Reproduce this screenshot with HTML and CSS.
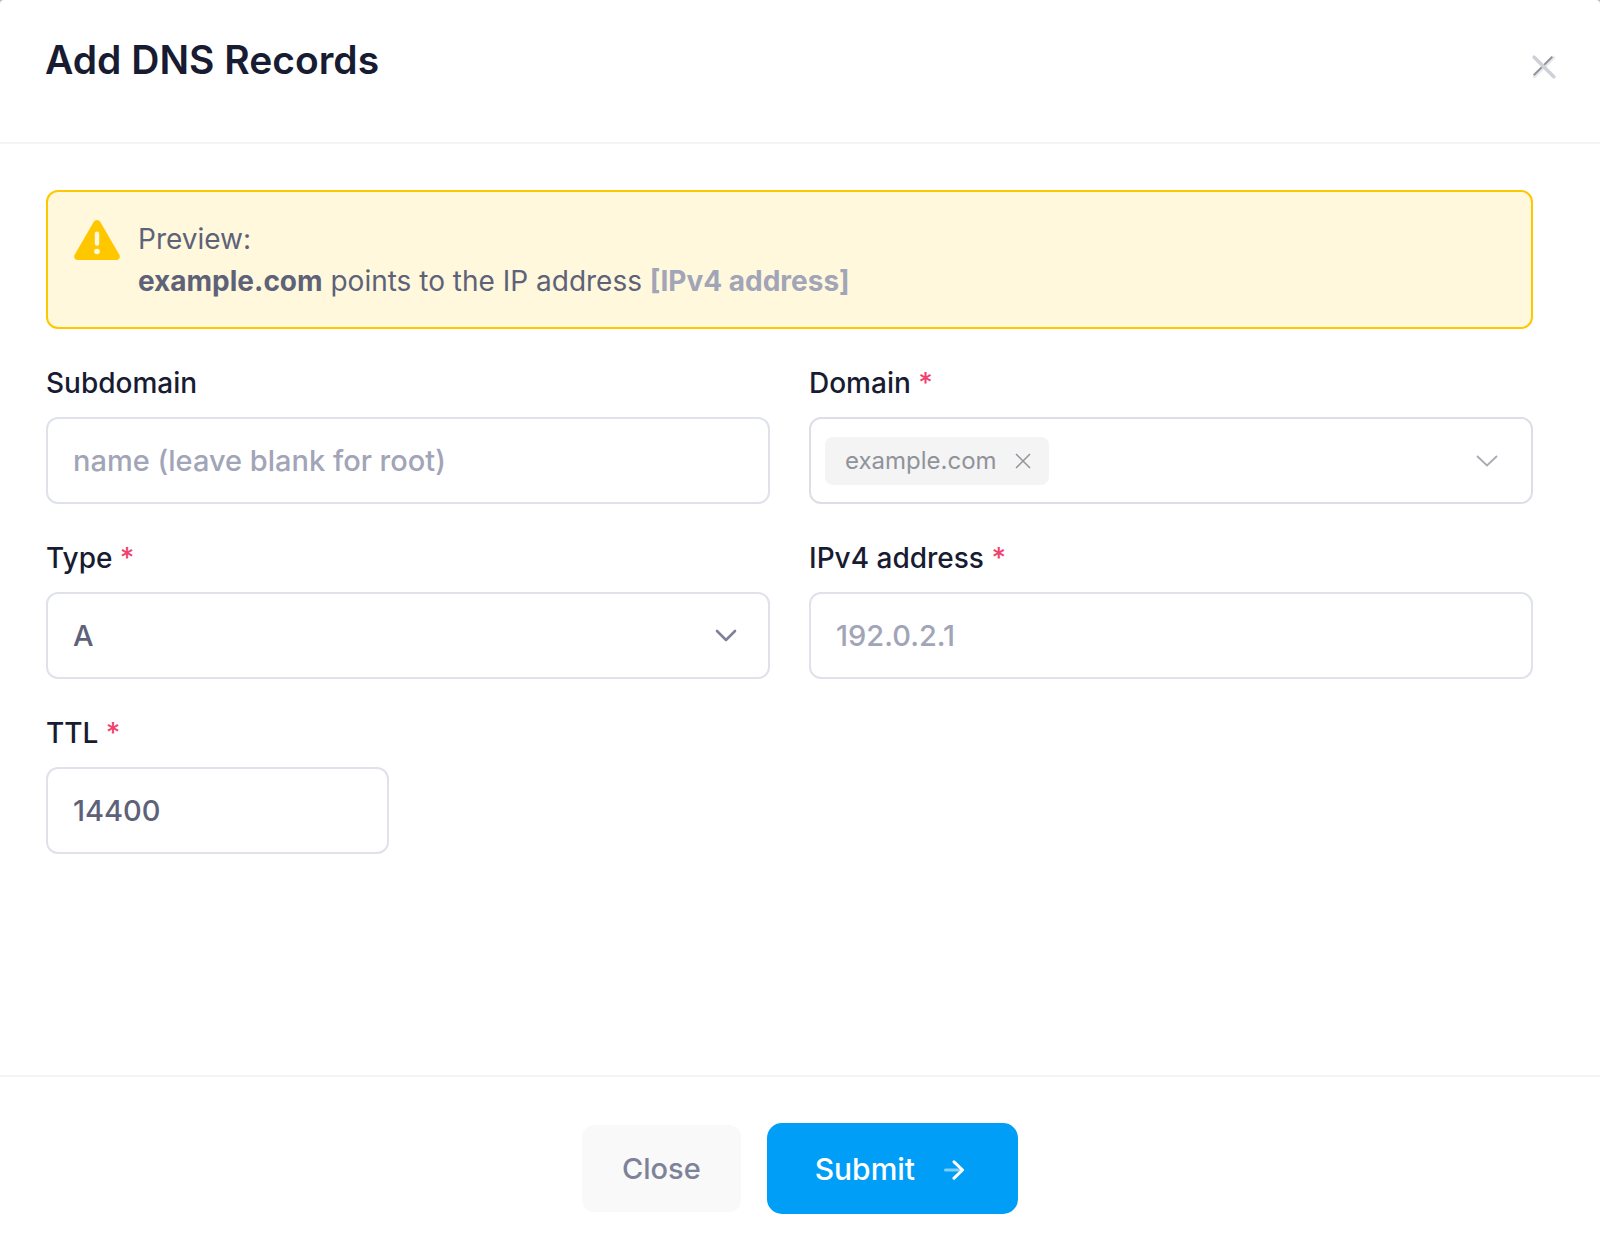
FILE: index.html
```html
<!DOCTYPE html>
<html lang="en">
<head>
<meta charset="utf-8">
<meta name="viewport" content="width=device-width, initial-scale=1">
<title>Add DNS Records</title>
<link rel="stylesheet" href="styles.css">
</head>
<body>
<form class="dialog" role="dialog" aria-labelledby="dialog-title">
  <header class="dialog-header">
    <h1 class="dialog-title" id="dialog-title">Add DNS Records</h1>
    <button class="dialog-dismiss" type="button" aria-label="Dismiss">
      <svg width="24" height="24" viewBox="0 0 24 24" fill="none" stroke-linecap="round">
        <path d="M2.500 21.500l19-19" stroke="#e9eaef" stroke-width="3.600"/>
        <path d="M1.700 20.300L20.300 1.700" stroke="#939396" stroke-width="2" stroke-linecap="butt"/>
        <path d="M2.200 2.200l19.600 19.600" stroke="#cfd0da" stroke-width="3.600"/>
      </svg>
    </button>
  </header>

  <main class="dialog-body">
    <div class="alert">
      <svg class="alert-icon" width="46" height="40" viewBox="0 0 46 40">
        <path d="M19.800 1.800a3.800 3.800 0 0 1 6.400 0l19 32.700c1.500 2.600.2 5.500-2.700 5.500H3.500c-2.900 0-4.200-2.900-2.700-5.500z" fill="#ffc700"/>
        <path d="M23 13.800v9.700" stroke="#fff8dd" stroke-width="4.400" stroke-linecap="round"/>
        <circle cx="23" cy="31.500" r="2.800" fill="#fff8dd"/>
      </svg>
      <div class="alert-text">
        <div>Preview:</div>
        <div><strong>example.com</strong> points to the IP address <strong class="muted">[IPv4 address]</strong></div>
      </div>
    </div>

    <div class="fields">
      <div class="field">
        <label class="label" for="subdomain">Subdomain</label>
        <input class="control" id="subdomain" type="text" placeholder="name (leave blank for root)">
      </div>
      <div class="field">
        <label class="label" for="domain">Domain <span class="required">*</span></label>
        <div class="control tag-select">
          <span class="tag">example.com
            <button class="tag-remove" type="button" aria-label="Remove example.com">
              <svg width="16" height="16" viewBox="0 0 16 16" fill="none" stroke="#909399" stroke-width="1.500"><path d="M1 1l14 14M15 1L1 15"/></svg>
            </button>
          </span>
          <input class="tag-input" id="domain" type="text" autocomplete="off">
          <svg width="22" height="12" viewBox="0 0 22 12" fill="none" stroke="#a8abb2" stroke-width="1.800"><path d="M1 1l10 9.500L21 1"/></svg>
        </div>
      </div>
      <div class="field">
        <label class="label" for="type">Type <span class="required">*</span></label>
        <div class="select">
          <select class="control" id="type">
            <option>A</option>
          </select>
          <svg class="select-arrow" width="22" height="14" viewBox="0 0 22 14" fill="none" stroke="#7e8299" stroke-width="2.600" stroke-linecap="round" stroke-linejoin="round"><path d="M2 2l9 9 9-9"/></svg>
        </div>
      </div>
      <div class="field">
        <label class="label" for="address">IPv4 address <span class="required">*</span></label>
        <input class="control" id="address" type="text" placeholder="192.0.2.1">
      </div>
      <div class="field field-short">
        <label class="label" for="ttl">TTL <span class="required">*</span></label>
        <input class="control" id="ttl" type="text" inputmode="numeric" value="14400">
      </div>
    </div>
  </main>

  <footer class="dialog-footer">
    <button class="button button-light" type="button">Close</button>
    <button class="button button-primary" type="submit">Submit
      <svg class="button-arrow" width="20" height="20" viewBox="0 0 20 20" fill="none" stroke="#fff" stroke-linecap="round" stroke-linejoin="round">
        <path d="M1.500 10H15" stroke-width="3" opacity=".5"/>
        <path d="M10 1.800l8.500 8.200-8.500 8.200" stroke-width="3"/>
      </svg>
    </button>
  </footer>
</form>
</body>
</html>
```

FILE: styles.css
```css
*,
*::before,
*::after {
  box-sizing: border-box;
}

body {
  margin: 0;
  background: #b8b8b8;
  color: #181c32;
  font-family: Inter, "Liberation Sans", sans-serif;
  font-size: 28px;
  line-height: 42px;
}

button,
input,
select {
  margin: 0;
  font: inherit;
}

button {
  padding: 0;
  border: 0;
  background: none;
  cursor: pointer;
}

svg {
  display: block;
  flex: none;
}

.dialog {
  display: flex;
  flex-direction: column;
  min-height: 100vh;
  border-radius: 4px 4px 0 0;
  background: #fff;
}

.dialog-header {
  display: flex;
  align-items: flex-start;
  justify-content: space-between;
  padding: 36px 25px 44px 45px;
  border-bottom: 2px solid #f4f4f4;
}

.dialog-title {
  margin: 0;
  font-size: 39px;
  font-weight: 600;
  line-height: 48px;
}

.dialog-dismiss {
  display: grid;
  place-items: center;
  width: 62px;
  height: 62px;
}

.dialog-body {
  flex: 1;
  padding: 46px 67px 46px 46px;
}

.alert {
  display: flex;
  gap: 18px;
  margin-bottom: 33px;
  padding: 26px 25px 25px;
  border: 2px solid #ffc700;
  border-radius: 12px;
  background: #fff8dd;
  color: #5e6278;
}

.alert-icon {
  margin: 2px 0 0 1px;
}

.alert strong {
  font-weight: 700;
}

.alert .muted {
  color: #a1a5b7;
}

.fields {
  display: grid;
  grid-template-columns: repeat(4, 1fr);
  gap: 33px 39px;
}

.field {
  display: flex;
  flex-direction: column;
  grid-column: span 2;
  gap: 13px;
}

.field-short {
  grid-column: span 1;
}

.label {
  font-weight: 500;
}

.required {
  color: #f1416c;
}

.control {
  width: 100%;
  height: 87px;
  padding: 0 25px;
  border: 2px solid #dfe2ea;
  border-radius: 12px;
  outline: 0;
  background: #fff;
  color: #5e6278;
  font-size: 29px;
  font-weight: 500;
}

.control::placeholder {
  color: #a1a5b7;
  opacity: 1;
}

.select {
  display: grid;
  align-items: center;
}

.select > * {
  grid-area: 1 / 1;
}

.select .control {
  appearance: none;
}

.select-arrow {
  justify-self: end;
  margin-right: 33px;
  pointer-events: none;
}

.tag-select {
  display: flex;
  align-items: center;
  padding: 0 33px 0 14px;
  border-color: #dcdfe6;
}

.tag {
  display: flex;
  align-items: center;
  gap: 18px;
  height: 48px;
  padding: 0 18px 0 20px;
  border-radius: 8px;
  background: #f4f4f5;
  color: #909399;
  font-size: 24px;
  font-weight: 400;
}

.tag-input {
  flex: 1;
  min-width: 0;
  border: 0;
  outline: 0;
  background: none;
}

.dialog-footer {
  display: flex;
  align-items: center;
  justify-content: center;
  gap: 26px;
  padding: 46px 46px 36px;
  border-top: 2px solid #f4f4f4;
}

.button {
  display: flex;
  align-items: center;
  justify-content: center;
  font-weight: 500;
}

.button-light {
  height: 87px;
  padding: 0 40px;
  border-radius: 12px;
  background: #f9f9f9;
  color: #7e8299;
  font-size: 29px;
}

.button-primary {
  gap: 29px;
  height: 91px;
  padding: 0 54px 0 48px;
  border-radius: 15px;
  background: #009ef7;
  color: #fff;
  font-size: 30px;
}

.button-arrow {
  margin-top: 3px;
}
```
